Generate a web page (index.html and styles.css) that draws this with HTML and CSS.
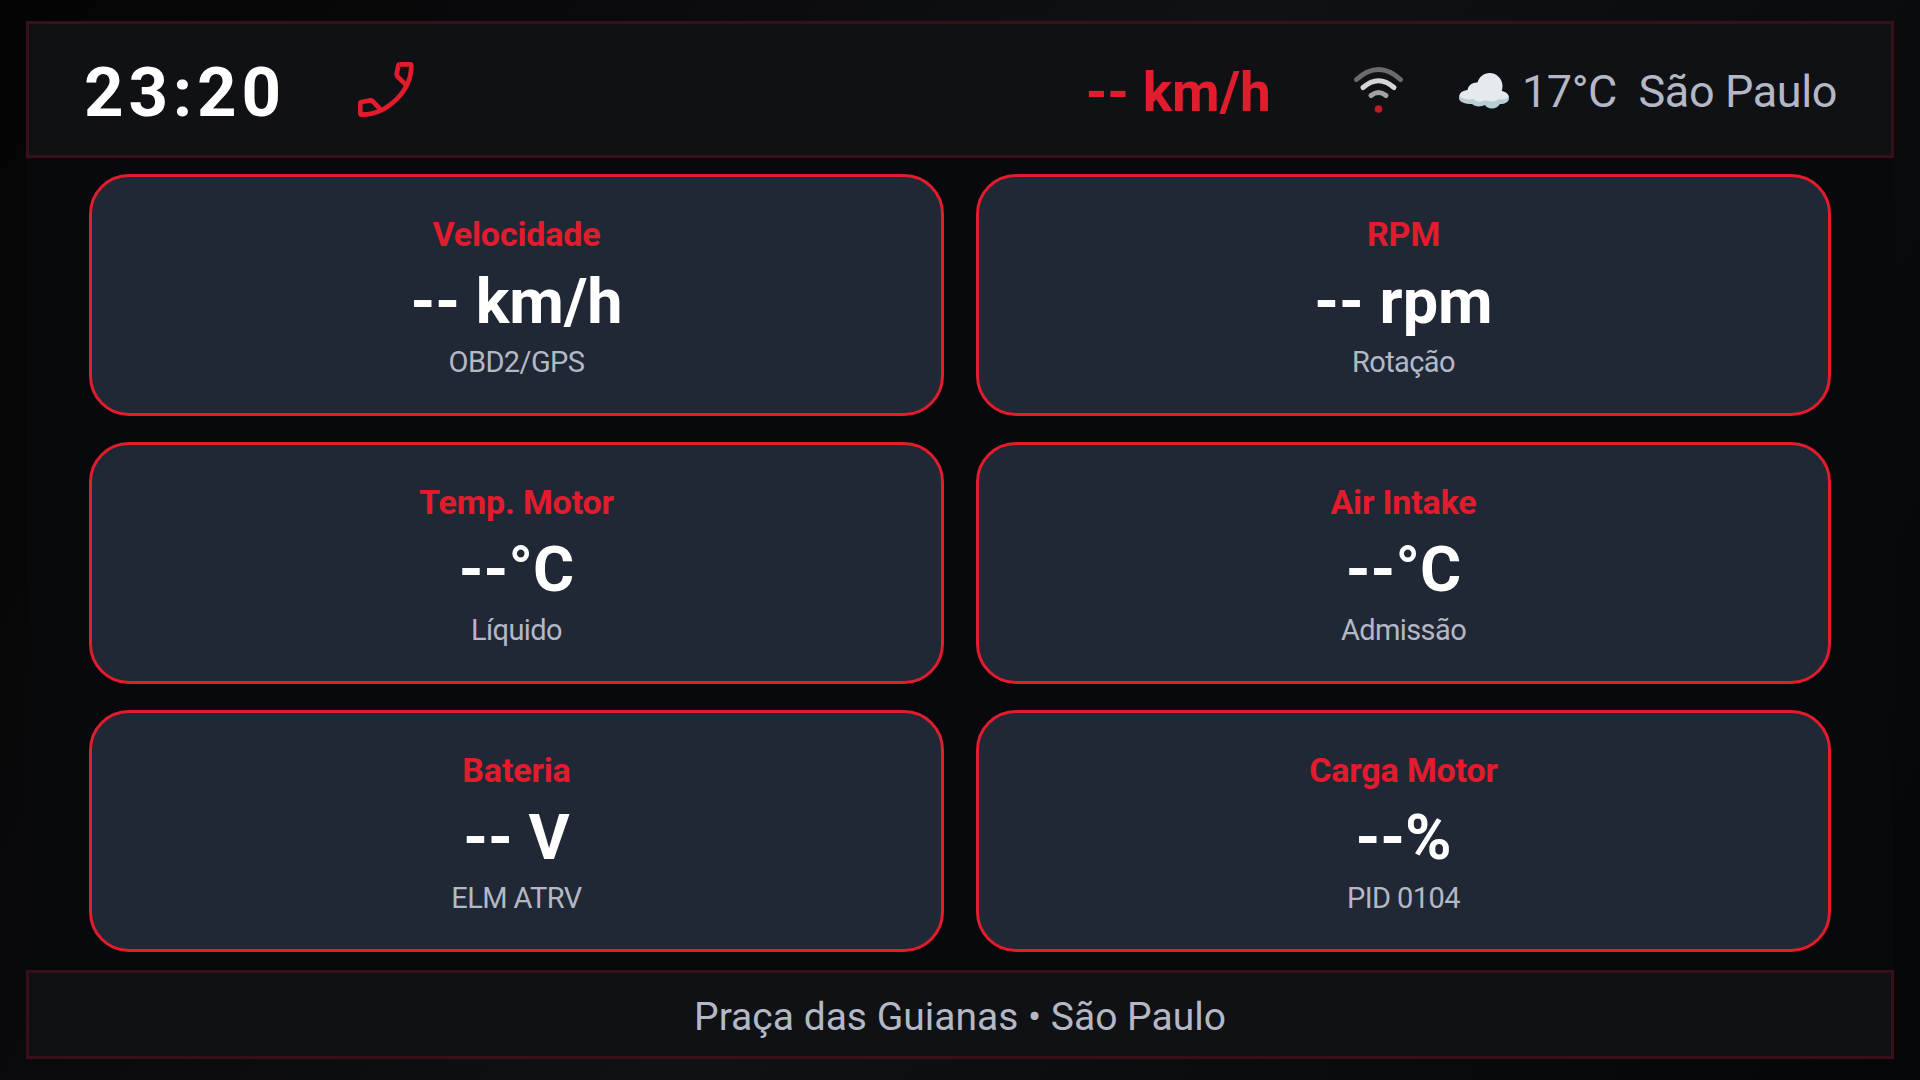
FILE: index.html
```html
<!DOCTYPE html>
<html lang="pt-BR">
<head>
    <meta charset="UTF-8">
    <meta name="viewport" content="width=device-width, initial-scale=1.0">
    <title>Painel</title>
    <link rel="stylesheet" href="styles.css">
</head>
<body>

    <div class="dashboard">
        <header class="topbar">
            <div class="clock">23:20</div>
            <svg class="phone-icon" viewBox="48 45 180 180">
                <path d="M179 58H211Q214 58 214 62C214 138 142 209 65 209Q61 209 61 205V175Q61 172 64 171L92 166Q95 166 97 168L122 193"/>
                <path d="M179 58Q176 58 175 61L170 88Q170 92 172 94L197 119"/>
            </svg>
            <div class="speed">-- km/h</div>
            <svg class="wifi-icon" viewBox="0 0 54 50">
                <path class="wifi-far" d="M5.5 14.5Q27.5 -5.5 49.5 14.5"/>
                <path class="wifi-mid" d="M12 22.5Q27.5 9 43 22.5"/>
                <path class="wifi-near" d="M20 30.5Q27.5 24.5 35 30.5"/>
                <circle class="wifi-dot" cx="27.5" cy="44" r="3.8"/>
            </svg>
            <svg class="cloud-icon" viewBox="0 0 50 36">
                <path class="cloud-shade" d="M0 25C0 19 5 17 9 17C25 12 40 12 43 18C47 19 50 21 50 25C50 29 46 31 41 31C39 34 36 35.500 33 35.500C30 35.500 27 34 26 32C22 34 16 34 13 31C6 31 0 29 0 25Z"/>
                <path class="cloud-light" d="M0.500 23C1 19 5 18 8.500 18C8.500 13 13 9 18.500 9.500C20 4 25 0 30.500 0C38 0 43.500 6 43.500 13C43.500 15 43 17 42.500 18.500C46 18.500 49.500 21 49.500 24C47 26.500 43 27 40 26C37 29 30 29 26 27C22 30 17 28.500 14 26C9 27.500 3 26 0.500 23Z"/>
            </svg>
            <div class="weather">17°C&nbsp; São Paulo</div>
        </header>

        <main class="grid">
            <div class="card">
                <div class="card-title">Velocidade</div>
                <div class="card-value">-- km/h</div>
                <div class="card-sub">OBD2/GPS</div>
            </div>
            <div class="card">
                <div class="card-title">RPM</div>
                <div class="card-value">-- rpm</div>
                <div class="card-sub">Rotação</div>
            </div>
            <div class="card">
                <div class="card-title">Temp. Motor</div>
                <div class="card-value">--°C</div>
                <div class="card-sub">Líquido</div>
            </div>
            <div class="card">
                <div class="card-title">Air Intake</div>
                <div class="card-value">--°C</div>
                <div class="card-sub">Admissão</div>
            </div>
            <div class="card">
                <div class="card-title">Bateria</div>
                <div class="card-value">-- V</div>
                <div class="card-sub">ELM ATRV</div>
            </div>
            <div class="card">
                <div class="card-title">Carga Motor</div>
                <div class="card-value">--%</div>
                <div class="card-sub">PID 0104</div>
            </div>
        </main>

        <footer class="bottombar">Praça das Guianas • São Paulo</footer>
    </div>

</body>
</html>
```
FILE: styles.css
```css
* {
    box-sizing: border-box;
}

body {
    margin: 0;
    height: 100vh;
    font-family: Roboto, sans-serif;
    background: linear-gradient(118deg, #040404 0%, #101115 50%, #050607 100%);
    color: #fff;
    overflow: hidden;
}

.dashboard {
    display: flex;
    flex-direction: column;
    height: 100vh;
    padding: 21px 26px;
}

.topbar {
    display: flex;
    align-items: center;
    height: 137px;
    padding: 0 54px 0 55px;
    background-color: #101115;
    border: 3px solid #3a1018;
}

.clock {
    width: 272px;
    padding-top: 6px;
    font-size: 69px;
    font-weight: bold;
    letter-spacing: 4.8px;
}

.phone-icon {
    width: 60px;
    height: 60px;
    fill: none;
    stroke: #e31c2d;
    stroke-width: 14;
    stroke-linejoin: round;
}

.speed {
    margin-left: auto;
    padding-top: 5px;
    font-size: 55px;
    font-weight: bold;
    color: #e31c2d;
}

.wifi-icon {
    width: 54px;
    height: 50px;
    margin-left: 80px;
    fill: none;
    stroke-width: 5;
    stroke-linecap: round;
}

.wifi-far {
    stroke: #6b6a6f;
}

.wifi-mid {
    stroke: #d5d5d7;
}

.wifi-near {
    stroke: #a2a2a4;
}

.wifi-dot {
    fill: #c11a29;
}

.cloud-icon {
    width: 50px;
    height: 36px;
    margin: 3px 0 0 54px;
}

.cloud-light {
    fill: #e4eaee;
}

.cloud-shade {
    fill: #b9ced3;
}

.weather {
    margin-left: 13px;
    padding-top: 4px;
    font-size: 45px;
    letter-spacing: -0.4px;
    color: #b4b8c5;
}

.grid {
    flex: 1;
    display: grid;
    grid-template-columns: 1fr 1fr;
    grid-template-rows: repeat(3, 242px);
    gap: 26px 32px;
    padding: 16px 63px 18px;
    background-color: #08090c;
}

.card {
    display: flex;
    flex-direction: column;
    align-items: center;
    justify-content: center;
    padding-top: 2px;
    background-color: #212835;
    border: 3px solid #e31c2d;
    border-radius: 40px;
}

.card-title {
    font-size: 34px;
    line-height: 40px;
    font-weight: bold;
    letter-spacing: -0.15px;
    color: #e31c2d;
}

.card-value {
    margin: 11px 0 6px;
    font-size: 63px;
    line-height: 74px;
    font-weight: bold;
}

.card-sub {
    font-size: 29px;
    line-height: 34px;
    letter-spacing: -0.6px;
    color: #b4b8c5;
}

.bottombar {
    display: flex;
    align-items: center;
    justify-content: center;
    height: 89px;
    padding-top: 4px;
    font-size: 39px;
    color: #b4b8c5;
    background-color: #101115;
    border: 3px solid #3a1018;
}
```
